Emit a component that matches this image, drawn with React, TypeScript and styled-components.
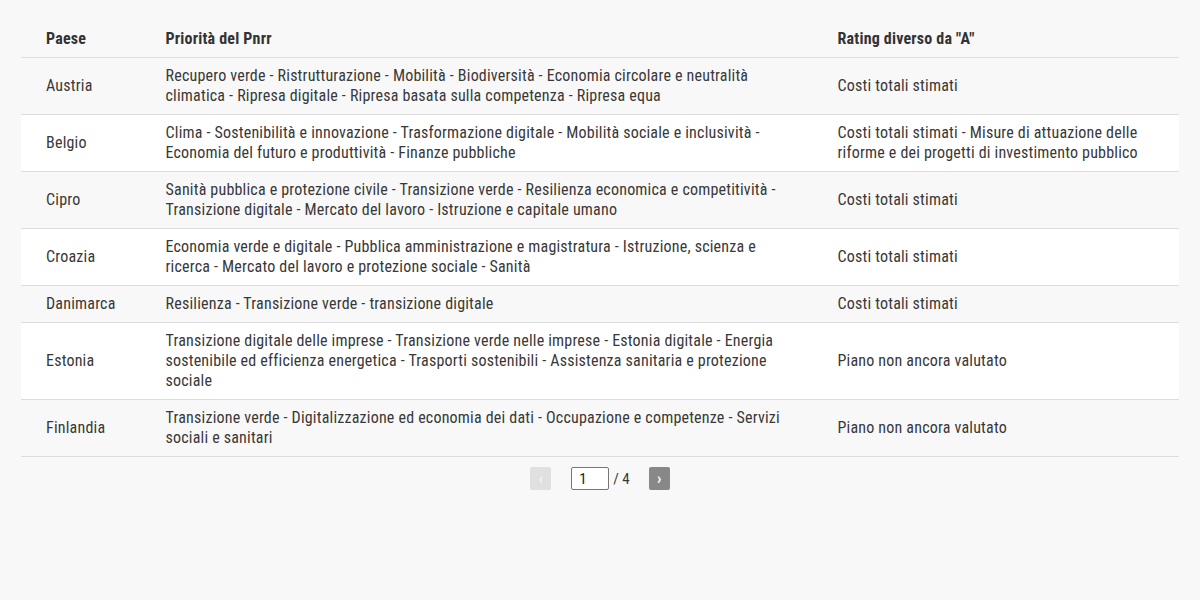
import React, { useState } from 'react';
import styled, { createGlobalStyle } from 'styled-components';

const GlobalStyle = createGlobalStyle`
  html, body {
    margin: 0;
    padding: 0;
    background: #f8f8f8;
  }
  body {
    font-family: "Roboto Condensed", Roboto, "Liberation Sans", sans-serif;
    font-stretch: condensed;
    color: #383838;
  }
`;

// --- Styled Components ---
const Wrapper = styled.div`
  padding: 21px 21px;
`;

const Table = styled.table`
  width: 100%;
  border-collapse: collapse;
  font-size: 16px;
  line-height: 20px;
  letter-spacing: 0.2px;
`;

const HeadCell = styled.th<{ width?: number }>`
  text-align: left;
  font-weight: 700;
  padding: 8px 25px 8px 25px;
  border-bottom: 1px solid #ddd;
  color: #333;
  width: ${props => (props.width ? `${props.width}px` : 'auto')};
`;

const Row = styled.tr<{ odd: boolean }>`
  background: ${props => (props.odd ? '#f8f8f8' : '#fff')};
  border-bottom: 1px solid #ddd;
`;

const Cell = styled.td`
  padding: 8px 25px;
  vertical-align: middle;
`;

const Pager = styled.div`
  display: flex;
  justify-content: center;
  align-items: center;
  margin-top: 10px;
  font-size: 15px;
`;

const PageButton = styled.button<{ active: boolean }>`
  width: 21px;
  height: 23px;
  padding: 0;
  border: none;
  border-radius: 2px;
  background: ${props => (props.active ? '#888' : '#e0e0e0')};
  color: ${props => (props.active ? '#fff' : '#f4f4f4')};
  font-family: inherit;
  font-size: 16px;
  font-weight: 700;
  line-height: 23px;
  cursor: pointer;
`;

const PageInput = styled.input`
  box-sizing: border-box;
  width: 38px;
  height: 23px;
  margin-left: 20px;
  padding: 0 7px;
  border: 1px solid #767676;
  border-radius: 2px;
  background: #fff;
  font-family: inherit;
  font-size: 15px;
  color: #222;
`;

const PageTotal = styled.span`
  margin: 0 19px 0 4px;
  font-size: 15px;
`;

// --- Data ---
interface Country {
  name: string;
  priorities: string;
  rating: string;
}

const countries: Country[] = [
  {
    name: 'Austria',
    priorities: 'Recupero verde - Ristrutturazione - Mobilità - Biodiversità - Economia circolare e neutralità climatica - Ripresa digitale - Ripresa basata sulla competenza - Ripresa equa',
    rating: 'Costi totali stimati',
  },
  {
    name: 'Belgio',
    priorities: 'Clima - Sostenibilità e innovazione - Trasformazione digitale - Mobilità sociale e inclusività - Economia del futuro e produttività - Finanze pubbliche',
    rating: 'Costi totali stimati - Misure di attuazione delle riforme e dei progetti di investimento pubblico',
  },
  {
    name: 'Cipro',
    priorities: 'Sanità pubblica e protezione civile - Transizione verde - Resilienza economica e competitività - Transizione digitale - Mercato del lavoro - Istruzione e capitale umano',
    rating: 'Costi totali stimati',
  },
  {
    name: 'Croazia',
    priorities: 'Economia verde e digitale - Pubblica amministrazione e magistratura - Istruzione, scienza e ricerca - Mercato del lavoro e protezione sociale - Sanità',
    rating: 'Costi totali stimati',
  },
  {
    name: 'Danimarca',
    priorities: 'Resilienza - Transizione verde - transizione digitale',
    rating: 'Costi totali stimati',
  },
  {
    name: 'Estonia',
    priorities: 'Transizione digitale delle imprese - Transizione verde nelle imprese - Estonia digitale - Energia sostenibile ed efficienza energetica - Trasporti sostenibili - Assistenza sanitaria e protezione sociale',
    rating: 'Piano non ancora valutato',
  },
  {
    name: 'Finlandia',
    priorities: 'Transizione verde - Digitalizzazione ed economia dei dati - Occupazione e competenze - Servizi sociali e sanitari',
    rating: 'Piano non ancora valutato',
  },
];

const App: React.FC = () => {
  const [page, setPage] = useState('1');

  return (
    <Wrapper>
      <GlobalStyle />
      <Table>
        <thead>
          <tr>
            <HeadCell width={68}>Paese</HeadCell>
            <HeadCell width={622}>Priorità del Pnrr</HeadCell>
            <HeadCell>Rating diverso da "A"</HeadCell>
          </tr>
        </thead>
        <tbody>
          {countries.map((c, i) => (
            <Row key={c.name} odd={i % 2 === 0}>
              <Cell>{c.name}</Cell>
              <Cell>{c.priorities}</Cell>
              <Cell>{c.rating}</Cell>
            </Row>
          ))}
        </tbody>
      </Table>
      <Pager>
        <PageButton active={false}>‹</PageButton>
        <PageInput value={page} onChange={e => setPage(e.target.value)} />
        <PageTotal>/ 4</PageTotal>
        <PageButton active={true}>›</PageButton>
      </Pager>
    </Wrapper>
  );
};

export default App;
